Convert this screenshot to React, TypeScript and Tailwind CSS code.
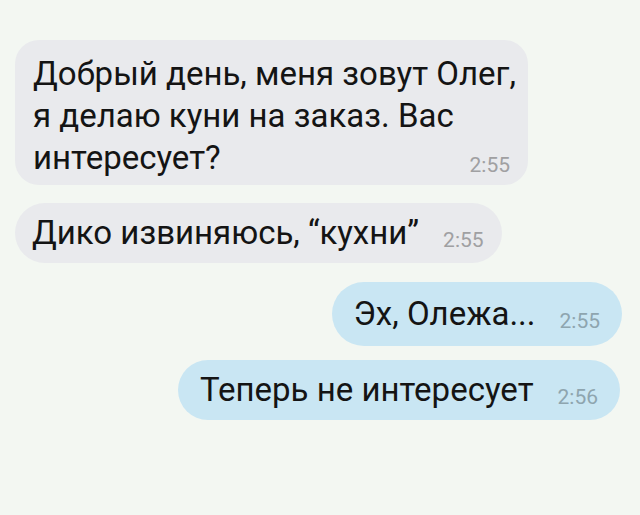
import clsx from 'clsx';

type Side = 'in' | 'out';

interface BubbleProps {
	side: Side;
	time: string;
	lines: string[];
	className?: string;
}

function Bubble({ side, time, lines, className }: BubbleProps) {
	const head = lines.slice(0, -1);
	const last = lines[lines.length - 1];

	return (
		<div
			className={clsx(
				'text-[33px] leading-[42px] text-[#141414]',
				side === 'in' ? 'self-start bg-[#e9eaed]' : 'self-end bg-[#c9e6f3]',
				className,
			)}
		>
			{head.map((line) => (
				<div key={line} className="whitespace-nowrap">
					{line}
				</div>
			))}
			<div className="flex items-baseline justify-between gap-[24px] whitespace-nowrap">
				<span>{last}</span>
				<span
					className={clsx(
						'translate-y-[3px] text-[21px] leading-none',
						side === 'in' ? 'text-[#a0a0a2]' : 'text-[#8ea5af]',
					)}
				>
					{time}
				</span>
			</div>
		</div>
	);
}

export default function App() {
	return (
		<div
			className="flex h-[515px] w-[640px] flex-col bg-[#f3f7f2] pl-[15px] pr-[18px] pt-[40px]"
			style={{ fontFamily: 'Roboto, "Noto Sans", sans-serif' }}
		>
			<Bubble
				side="in"
				time="2:55"
				className="w-[513px] rounded-[24px] pb-[6px] pl-[18px] pr-[18px] pt-[13px]"
				lines={[
					'Добрый день, меня зовут Олег,',
					'я делаю куни на заказ. Вас',
					'интересует?',
				]}
			/>
			<Bubble
				side="in"
				time="2:55"
				className="mt-[18px] flex h-[60px] items-center rounded-[30px] pl-[17px] pr-[18px]"
				lines={['Дико извиняюсь, “кухни”']}
			/>
			<Bubble
				side="out"
				time="2:55"
				className="mt-[19px] flex h-[64px] items-center rounded-[32px] pl-[22px] pr-[22px]"
				lines={['Эх, Олежа...']}
			/>
			<Bubble
				side="out"
				time="2:56"
				className="mr-[2px] mt-[14px] flex h-[60px] items-center rounded-[30px] pl-[22px] pr-[22px]"
				lines={['Теперь не интересует']}
			/>
		</div>
	);
}
